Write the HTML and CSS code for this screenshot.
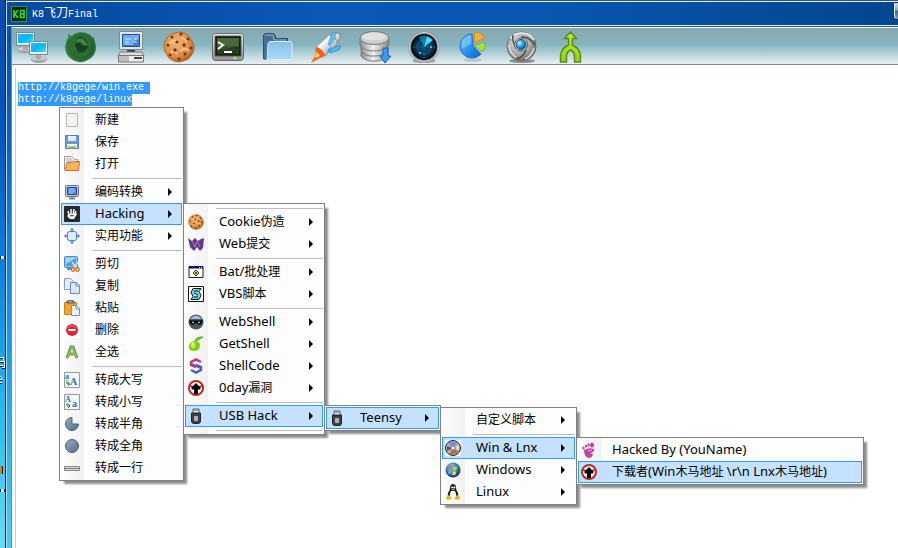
FILE: index.html
```html
<!DOCTYPE html>
<html lang="zh-CN">
<head>
<meta charset="utf-8">
<title>K8飞刀Final</title>
<link rel="stylesheet" href="styles.css">
</head>
<body>
<svg class="defs" aria-hidden="true">
  <defs>
    <linearGradient id="screen" x1="0" y1="0" x2="1" y2="1"><stop offset="0" stop-color="#2fb4f5"/><stop offset=".5" stop-color="#00b8ff"/><stop offset="1" stop-color="#3fe4ff"/></linearGradient>
    <linearGradient id="metal" x1="0" y1="0" x2="0" y2="1"><stop offset="0" stop-color="#f4f4f4"/><stop offset="1" stop-color="#8e8e8e"/></linearGradient>
    <linearGradient id="steel" x1="0" y1="0" x2="1" y2="0"><stop offset="0" stop-color="#8d8d8d"/><stop offset=".45" stop-color="#f2f2f2"/><stop offset="1" stop-color="#858585"/></linearGradient>
    <linearGradient id="hull" x1="0" y1="0" x2="1" y2="1"><stop offset="0" stop-color="#b9b9b9"/><stop offset=".35" stop-color="#fdfdfd"/><stop offset=".7" stop-color="#b4b4b4"/><stop offset="1" stop-color="#777"/></linearGradient>
    <radialGradient id="dough" cx=".4" cy=".35" r=".7"><stop offset="0" stop-color="#f2b878"/><stop offset=".65" stop-color="#dd8c42"/><stop offset="1" stop-color="#a95a1e"/></radialGradient>
    <radialGradient id="fox" cx=".55" cy=".5" r=".6"><stop offset="0" stop-color="#0f3818"/><stop offset=".55" stop-color="#1f5c28"/><stop offset="1" stop-color="#43904c"/></radialGradient>
    <linearGradient id="folder" x1="0" y1="0" x2="0" y2="1"><stop offset="0" stop-color="#88bfe6"/><stop offset="1" stop-color="#a9dbf6"/></linearGradient>
    <linearGradient id="bluepie" x1="0" y1="0" x2="1" y2="1"><stop offset="0" stop-color="#6cc2ff"/><stop offset=".6" stop-color="#2089ee"/><stop offset="1" stop-color="#0d62cc"/></linearGradient>
    <radialGradient id="radar" cx=".5" cy=".5" r=".55"><stop offset="0" stop-color="#0d5686"/><stop offset="1" stop-color="#020d18"/></radialGradient>
    <radialGradient id="ball" cx=".4" cy=".35" r=".7"><stop offset="0" stop-color="#e6e6e6"/><stop offset=".6" stop-color="#a6a6a6"/><stop offset="1" stop-color="#606060"/></radialGradient>
    <radialGradient id="lens" cx=".35" cy=".35" r=".7"><stop offset="0" stop-color="#c8f4ff"/><stop offset=".5" stop-color="#2fa1dd"/><stop offset="1" stop-color="#08548c"/></radialGradient>
    <linearGradient id="lime" x1="0" y1="0" x2="0" y2="1"><stop offset="0" stop-color="#c5e84a"/><stop offset="1" stop-color="#91d010"/></linearGradient>
    <linearGradient id="slate" x1="0" y1="0" x2="1" y2="1"><stop offset="0" stop-color="#9aaec4"/><stop offset="1" stop-color="#526b88"/></linearGradient>
    <radialGradient id="orb" cx=".4" cy=".3" r=".8"><stop offset="0" stop-color="#8fd0f4"/><stop offset=".55" stop-color="#2a6ca8"/><stop offset="1" stop-color="#0c2c58"/></radialGradient>
    <g id="cookie">
      <path d="M16 1q3 0 5 1 3 1 5 3l3 5q2 3 2 7t-3 8q-2 3-5 4t-7 2q-4 0-7-2-4-2-5-5-3-4-3-8 0-5 3-9 2-3 5-4 4-2 7-2z" fill="url(#dough)" stroke="#b5682c"/>
      <path d="M6 13q4-5 9-2M17 20q5-4 9 0M7 22q4-4 7 1M18 7q4 0 6 4" fill="none" stroke="#f7cf9b" stroke-width="1.5"/>
      <g fill="#7b2e18"><circle cx="9" cy="6" r="1.5"/><circle cx="18" cy="3" r="1.5"/><circle cx="25" cy="8" r="1.6"/><circle cx="14" cy="11" r="1.6"/><circle cx="5" cy="14" r="1.5"/><circle cx="21" cy="14" r="1.7"/><circle cx="28" cy="17" r="1.5"/><circle cx="12" cy="19" r="1.7"/><circle cx="22" cy="23" r="1.5"/><circle cx="7" cy="24" r="1.4"/><circle cx="16" cy="28" r="1.5"/></g>
    </g>
    <g id="usb">
      <path d="M5 5V1h6v4" fill="#eee" stroke="#555"/><path d="M6.500 2.500h1M8.500 2.500h1" stroke="#333"/>
      <path d="M3.500 5h9v8q0 2.500-2.500 2.500H6q-2.500 0-2.500-2.500z" fill="#3e4247" stroke="#202327"/><rect x="6" y="8" width="4" height="5" rx="1" fill="#aeb4ba"/>
    </g>
    <g id="zero-day">
      <circle cx="8" cy="8" r="7" fill="#fff" stroke="#c22624" stroke-width="2"/><path d="M2 6l4 1 1 3M14 6l-4 1-1 3" fill="none" stroke="#c22624" stroke-width="1.500"/>
      <path d="M8 3l3 3 2 2-2 2-1-1v5H6V9l-1 1-2-2 2-2z" fill="#080808"/>
    </g>
  </defs>
</svg>

<div class="screen">
  <aside class="desktop" aria-hidden="true">
    <i class="tick tick-a"></i>
    <svg class="fragment" viewBox="0 0 5 30"><path d="M0 2.500h4M3.500 2v4M0 6.500h5M0 10.500h3M4.500 7v5M2 12.500h3" fill="none" stroke="#f4fbff"/><path d="M0 24.500h2M1.500 22v3M0 21.500h1M0 27.500h2" fill="none" stroke="#e4f3fa"/></svg>
    <i class="chip"></i>
    <i class="tick tick-b"></i>
  </aside>
  <main class="window">
    <header class="titlebar">
      <svg class="app-icon" viewBox="0 0 16 16"><path d="M0 0h16v16H0z" fill="#2c9a3c"/><path d="M1 1h14v14H1z" fill="#062708"/><path d="M3 4v8M7 4l-3 4 3 4M9.500 4.500h3.500V8H9.500zM9.500 8h3.500v3.500H9.500z" fill="none" stroke="#28d83c" stroke-width="1.700"/></svg>
      <h1>K8<span class="title-zh">飞刀</span>Final</h1>
      <span class="caption-button"></span>
    </header>
    <section class="client">
      <nav class="toolbar" aria-label="工具栏">
        <button class="tool" aria-label="Network"><svg viewBox="0 0 32 32"><ellipse cx="9" cy="19" rx="8" ry="3" fill="url(#metal)" stroke="#999" stroke-width=".5"/><path d="M7 13h5v6H7z" fill="#aaa"/><path d="M.5 1.500h18v13H.500z" fill="#e2e7e9" stroke="#788"/><path d="M2 3h15v9H2z" fill="url(#screen)"/><ellipse cx="23" cy="28.500" rx="8" ry="3" fill="url(#metal)" stroke="#888" stroke-width=".5"/><path d="M20 22h5v6h-5z" fill="#aaa"/><path d="M13.500 10.500h18v13h-18z" fill="#eaf0f2" stroke="#788"/><path d="M15 12h15v9H15z" fill="url(#screen)"/></svg></button>
        <button class="tool" aria-label="Browser"><svg viewBox="0 0 32 32"><path d="M3 2l3 3q4-3 9-4 9 0 13 6l1-1 1 5q3 10-4 16-6 5-13 4Q1 28 0 17 1 9 3 7z" fill="url(#fox)"/><path d="M3 9l8-2 4 3-5 3 2 3 5 1-6 2q3 4 8 2 5-3 4-9-2-6-8-6 8-3 11 4 3 10-5 15-8 4-15-3Q0 16 3 9z" fill="#2e6c35"/><path d="M12 9q5-3 8 1l3 4-4 1-6-3z" fill="#5aa260" opacity=".65"/><path d="M10 13l5-2 4 4-2 5-5-2z" fill="#12401b"/></svg></button>
        <button class="tool" aria-label="Computer"><svg viewBox="0 0 32 32"><path d="M5.500.500h23v18h-23z" fill="#e1e5e9" stroke="#838990"/><path d="M8.500 3.500h17v12h-17z" fill="#3c83d0" stroke="#174f91"/><path d="M9 4h16v4L9 15z" fill="#6eabea"/><path d="M11 8h6m3 0h3M11 11h4m3 0h5M12 13h7" stroke="#c7eaff"/><path d="M13 19h8v3h-8z" fill="#333b46"/><path d="M6 21h22l2 4H4z" fill="#ddd" stroke="#777"/><path d="M4.500 24.500h25V31h-25z" fill="#eee" stroke="#777"/><path d="M6 25v6m2-6v6m2-6v6m2-6v6m2-6v6" stroke="#8d8d8d"/><path d="M20 27h8" stroke="#444" stroke-width="2"/></svg></button>
        <button class="tool" aria-label="Cookie"><svg viewBox="0 0 32 32"><use href="#cookie"/></svg></button>
        <button class="tool" aria-label="Terminal"><svg viewBox="0 0 32 32"><rect x=".5" y="2.500" width="31" height="27" rx="3" fill="url(#metal)" stroke="#686868"/><path d="M3 5h26v20H3z" fill="#16200f" stroke="#555"/><path d="M5 7h22v8L5 20z" fill="#4b683d"/><path d="M5 15h22v8H5z" fill="#304929" opacity=".7"/><path d="M6 11l5 3-5 4" fill="none" stroke="#e3ffdc" stroke-width="2"/><path d="M12 21h8" stroke="#fff" stroke-width="2"/><circle cx="23" cy="27" r="1.500" fill="#91ff28"/></svg></button>
        <button class="tool" aria-label="Folder"><svg viewBox="0 0 32 32"><path d="M2.500 28V4l2-1.500h8l2 2v3h12V28z" fill="#496f98" stroke="#2d4c70"/><path d="M4 5l1-1h7l1 5h12" fill="none" stroke="#8eafcf"/><path d="M8.500 10.500H30l1 2v16H6l1-16z" fill="url(#folder)" stroke="#d5efff"/></svg></button>
        <button class="tool" aria-label="Rocket"><svg viewBox="0 0 32 32"><path d="M13 10l7-3 5-6 1 7-4 6zM21 18l9-4 1 2-2 3-9 3z" fill="#54b6f4" stroke="#2b7cb6" stroke-width=".7"/><path d="M6 16L19 4q7-3 11-1 1 4-3 10L15 25q-2-6-9-9z" fill="url(#hull)" stroke="#777" stroke-width=".7"/><path d="M20 4q6 2 8 8" fill="none" stroke="#888"/><path d="M22 2l-4 11 2 2 5-8 1-6z" fill="#5fb9f4" stroke="#3d8fd0" stroke-width=".5"/><path d="M18 18l4-3-1 5-4 2z" fill="#2aaee4"/><path d="M6 16q7 2 9 9l-7 3-7 4 4-7z" fill="#f4601b"/><path d="M6 21q3 1 4 4l-4 2-1-1z" fill="#ffd05a"/></svg></button>
        <button class="tool" aria-label="Database"><svg viewBox="0 0 32 32"><g fill="url(#steel)" stroke="#777"><path d="M2 21v4q5 6 14 5 9 0 13-5v-5z"/><path d="M2 15v5q4 6 14 5 10 0 13-5v-6z"/><path d="M1 8v6q4 6 14 6t15-6V8z"/><ellipse cx="15.500" cy="7" rx="14.500" ry="6.500" fill="#ccc"/></g><ellipse cx="15" cy="5.500" rx="12" ry="4" fill="#eee" opacity=".6"/><path d="M24 17h5v8h3l-6 7-5-7h3z" fill="#339bf1" stroke="#1764bd"/></svg></button>
        <button class="tool" aria-label="Radar"><svg viewBox="0 0 32 32"><ellipse cx="16" cy="30" rx="12" ry="2" fill="#667" opacity=".5"/><circle cx="16" cy="16" r="14" fill="url(#radar)" stroke="#8d8d8d" stroke-width="3"/><circle cx="16" cy="16" r="14.500" fill="none" stroke="#d7d7d7"/><circle cx="16" cy="16" r="12" fill="none" stroke="#051019" stroke-width="2"/><path d="M16 4v24M4 16h24" stroke="#155b82"/><circle cx="16" cy="16" r="7" fill="none" stroke="#1d638c"/><path d="M16 16L19 5l6 4z" fill="#35e4ff"/><path d="M16 15L11 6q4-2 8-1z" fill="#2399cc" opacity=".6"/><circle cx="12" cy="22" r="1" fill="#7eeaff"/><circle cx="23" cy="16" r="1" fill="#64caff"/></svg></button>
        <button class="tool" aria-label="Chart"><svg viewBox="0 0 32 32"><ellipse cx="16" cy="29" rx="9" ry="2" fill="#98afb5" opacity=".5"/><path d="M15 3A12 12 0 1 0 24 23L16 15z" fill="url(#bluepie)" stroke="#1976cf"/><path d="M5 10q3-5 9-6v9l-9 5q-1-4 0-8z" fill="#a5dcff" opacity=".45"/><path d="M17.500 12V1q7 0 10.500 6z" fill="#f3b13b" stroke="#c88c28"/><path d="M17.500 15l10-4q2 6-2 10z" fill="#a6e243" stroke="#79ba26"/></svg></button>
        <button class="tool" aria-label="Scanner"><svg viewBox="0 0 32 32"><ellipse cx="16" cy="30" rx="13" ry="2" fill="#555" opacity=".6"/><circle cx="15.500" cy="15.500" r="14.500" fill="url(#ball)" stroke="#686868"/><path d="M4 7q5-5 12-5 8 0 12 7" fill="none" stroke="#f4f4f4" stroke-width="1.500"/><path d="M15 6q8-1 14 8M9 15Q6 9 7 4M20 19q-2 6-9 9" fill="none" stroke="#4c4c4c" stroke-width="1.500"/><path d="M3 14q1 9 7 12M28 17q-2 8-9 11" fill="none" stroke="#dedede" stroke-width="1.500"/><circle cx="15" cy="13.500" r="6.500" fill="#e9e9e9" stroke="#555"/><circle cx="15" cy="13.500" r="5" fill="url(#lens)" stroke="#155178"/></svg></button>
        <button class="tool" aria-label="Merge"><svg viewBox="0 0 32 32"><path d="M15.500 1l6 6.500h-4V14q8 4 8 11v6h-6v-6q0-4-4-6-4 2-4 6v6h-6v-6q0-7 8-11V7.500h-4z" fill="url(#lime)" stroke="#568f0f" stroke-width="1.500"/></svg></button>
      </nav>
      <textarea class="editor" aria-label="文本" spellcheck="false" wrap="off">http://k8gege/win.exe
http://k8gege/linux</textarea>
    </section>
  </main>
</div>

<ul class="menu context-menu">
  <li><button class="item"><svg viewBox="0 0 16 16"><path d="M2.500 1.500h11v13h-11z" fill="#f4f4f0" stroke="#b8b8b0"/></svg><span class="label zh">新建</span></button></li>
  <li><button class="item"><svg viewBox="0 0 16 16"><path d="M1.500 1.500h13v13h-13z" fill="#6c98d8" stroke="#5a80c4"/><path d="M4 2h8v5H4z" fill="#dcecff"/><path d="M4 3h8" stroke="#fff"/><path d="M3 10h10v4H3z" fill="#fff"/><path d="M4 12h8v2H4z" fill="#9bca60"/></svg><span class="label zh">保存</span></button></li>
  <li><button class="item"><svg viewBox="0 0 16 16"><path d="M.5.500h7l3 3h3v10H.500z" fill="#f4f4f4" stroke="#999"/><path d="M2 3h6M2 5h8" stroke="#aaa"/><path d="M3 6.500h6l1-1h5.500l-1 9H1z" fill="#ffb45c" stroke="#cd731f"/></svg><span class="label zh">打开</span></button></li>
  <li class="separator"></li>
  <li><button class="item"><svg viewBox="0 0 16 16"><rect x="1.500" y="1.500" width="13" height="11" rx="1" fill="#ccd0d6" stroke="#686e7d"/><path d="M3.500 3.500h9v7h-9z" fill="#4d91df" stroke="#203f83"/><path d="M5 5h5M5 7h6M5 9h4" stroke="#9ecfff"/><path d="M5 14.500h6M7 13h2" stroke="#888" stroke-width="2"/></svg><span class="label zh">编码转换</span><i class="arrow"></i></button></li>
  <li><button class="item open"><svg viewBox="0 0 16 16"><rect width="16" height="16" rx="1" fill="#292929"/><path d="M4 5l1 4M7 3v6M10 3L9 9M12 5l-2 5" stroke="#fff" stroke-width="1.500"/><path d="M5 8h6l1-1 1 1-3 5H6L3 10l1-1z" fill="#fff"/><path d="M6 10q2-1 4 0" fill="none" stroke="#333"/></svg><span class="label">Hacking</span><i class="arrow"></i></button>
    <ul class="menu submenu menu-hacking">
      <li class="separator"></li>
      <li><button class="item"><svg viewBox="0 0 32 32"><use href="#cookie"/></svg><span class="label">Cookie<span class="zh">伪造</span></span><i class="arrow"></i></button></li>
      <li><button class="item"><svg viewBox="0 0 16 16"><path d="M0 2l4 3 3-3 3 3 3-2 3-1-1 10-3 3-3-4-3 4-4-4z" fill="#633a83"/><path d="M4 5l3 6 2-6M10 6l2 5" fill="none" stroke="#a984c1"/></svg><span class="label">Web<span class="zh">提交</span></span><i class="arrow"></i></button></li>
      <li class="separator"></li>
      <li><button class="item"><svg viewBox="0 0 16 16"><path d="M1 2.500h14v11H1z" fill="#fff" stroke="#222"/><path d="M1 3.500h14" stroke="#000090" stroke-width="2"/><path d="M11 3.500h3" stroke="#fff" stroke-dasharray="1 1"/><path d="M8 6l3 3-3 3-3-3z" fill="#e5e529" stroke="#333"/><circle cx="8" cy="9" r="1" fill="#222"/></svg><span class="label">Bat/<span class="zh">批处理</span></span><i class="arrow"></i></button></li>
      <li><button class="item"><svg viewBox="0 0 16 16"><path d="M.5.500h15v15H.500z" fill="#fff" stroke="#111"/><path d="M5 2.500h8l-2 3 2 4-2 4H3l2-3-2-4z" fill="#68d9dc" stroke="#111"/><path d="M6 5h4M6 7l4 2M6 11h4" stroke="#111"/><path d="M6 9h2" stroke="#fff"/></svg><span class="label">VBS<span class="zh">脚本</span></span><i class="arrow"></i></button></li>
      <li class="separator"></li>
      <li><button class="item"><svg viewBox="0 0 16 16"><circle cx="8" cy="8" r="7.500" fill="#4b5662"/><path d="M2 5q6-7 12 0z" fill="#a6bfd3"/><path d="M1 6q6 1 14 0-1 5-4 5L8 9l-3 2q-3 0-4-5z" fill="#07090e"/><path d="M4 8l2 1M10 9l2-1" stroke="#fff"/></svg><span class="label">WebShell</span><i class="arrow"></i></button></li>
      <li><button class="item"><svg viewBox="0 0 16 16"><path d="M7 5q1-4 8-4-3 4-7 4 4 1 4 4 0 6-6 6-6 0-5-5 1-5 6-5z" fill="#85cf1c"/><path d="M7 5q1-4 8-4" fill="none" stroke="#349127"/><ellipse cx="5" cy="9" rx="2" ry="3" fill="#ccf56e"/></svg><span class="label">GetShell</span><i class="arrow"></i></button></li>
      <li><button class="item"><svg viewBox="0 0 16 16"><path d="M13 4L8 1.500 3 4v3l5 2" fill="none" stroke="#ca3770" stroke-width="2.500"/><path d="M8 7l5 2v3l-5 2.500L3 12" fill="none" stroke="#475fbd" stroke-width="2.500"/><path d="M3 6l10 4" stroke="#7f4a9d" stroke-width="2"/></svg><span class="label">ShellCode</span><i class="arrow"></i></button></li>
      <li><button class="item"><svg viewBox="0 0 16 16"><use href="#zero-day"/></svg><span class="label">0day<span class="zh">漏洞</span></span><i class="arrow"></i></button></li>
      <li class="separator"></li>
      <li><button class="item open"><svg viewBox="0 0 16 16"><use href="#usb"/></svg><span class="label">USB Hack</span><i class="arrow"></i></button>
        <ul class="menu submenu menu-usb">
          <li><button class="item open"><svg viewBox="0 0 16 16"><use href="#usb"/></svg><span class="label">Teensy</span><i class="arrow"></i></button>
            <ul class="menu submenu menu-teensy">
              <li><button class="item"><svg viewBox="0 0 16 16"></svg><span class="label zh">自定义脚本</span><i class="arrow"></i></button></li>
              <li class="separator"></li>
              <li><button class="item open"><svg viewBox="0 0 16 16"><path d="M0 0h16v16H0z" fill="#fff"/><circle cx="8" cy="8" r="7.500" fill="#b8b4c5" stroke="#222"/><path d="M8 8L3 3q5-4 10 0z" fill="#7d91e0"/><path d="M8 8l6 4q-5 4-10 2z" fill="#aa7454"/><path d="M8 8L2 6v5z" fill="#7b4d44"/><path d="M8 8l6-3v5z" fill="#ead4c7"/><circle cx="8" cy="8" r="2" fill="#fff" stroke="#77758a"/></svg><span class="label">Win &amp; Lnx</span><i class="arrow"></i></button>
                <ul class="menu submenu menu-payload">
                  <li><button class="item"><svg viewBox="0 0 16 16"><g fill="#bd43a5"><ellipse cx="11" cy="3" rx="2" ry="2.500"/><ellipse cx="7.500" cy="3" rx="1.200" ry="1.700"/><ellipse cx="5" cy="4" rx="1.200" ry="1.600"/><ellipse cx="2.500" cy="6" rx="1.200" ry="1.500"/><path d="M3 8q5-3 10-1 1 3-4 4l3 1q-1 4-4 4-5-1-5-8z"/></g><path d="M7 9l4-1" stroke="#e6a7da"/></svg><span class="label">Hacked By (YouName)</span></button></li>
                  <li><button class="item open"><svg viewBox="0 0 16 16"><use href="#zero-day"/></svg><span class="label"><span class="zh">下载者</span>(Win<span class="zh">木马地址</span> \r\n Lnx<span class="zh">木马地址</span>)</span></button></li>
                </ul>
              </li>
              <li><button class="item"><svg viewBox="0 0 16 16"><circle cx="8" cy="8" r="7.500" fill="url(#orb)"/><path d="M4 4q2-1 3.500 0L7 7.500q-2-1-3.500 0z" fill="#f36b2e"/><path d="M8.500 4.500q2 1 4 0l-1 3.500q-2 1-3.500 0z" fill="#a3dc3d"/><path d="M3.500 8.500q2-1 3.500 0L6 12q-2-1-3 0z" fill="#57b4f2"/><path d="M8 9q2 1 3.500 0l-1 3.500q-2 1-3.500 0z" fill="#fbd544"/></svg><span class="label">Windows</span><i class="arrow"></i></button></li>
              <li><button class="item"><svg viewBox="0 0 16 16"><path d="M5 4q0-4 3-4t3 4q0 2 2 5 1 3-1 5H4q-2-2-1-5 2-3 2-5z" fill="#1d1d1d"/><path d="M6 7h4q2 3 1 7H5Q4 10 6 7z" fill="#fff"/><circle cx="7" cy="3.500" r="1" fill="#fff"/><circle cx="9.300" cy="3.500" r="1" fill="#fff"/><path d="M6.500 5h3.500L8 6.500zM1 13l3-2 3 4-5 1zM15 13l-3-2-3 4 5 1z" fill="#f1b01d"/></svg><span class="label">Linux</span><i class="arrow"></i></button></li>
            </ul>
          </li>
        </ul>
      </li>
      <li class="separator"></li>
    </ul>
  </li>
  <li><button class="item"><svg viewBox="0 0 16 16"><rect x="3.500" y="3.500" width="9" height="9" rx="2" fill="#deebfb" stroke="#4f77cc"/><path d="M8 0l2 2.500H6zM8 16l2-2.500H6zM0 8l2.500-2v4zM16 8l-2.500-2v4z" fill="#3469d7"/></svg><span class="label zh">实用功能</span><i class="arrow"></i></button></li>
  <li class="separator"></li>
  <li><button class="item"><svg viewBox="0 0 16 16"><rect x=".5" y=".5" width="13" height="11" rx="1" fill="#8cc5f0" stroke="#428ec8"/><path d="M2 2h10v8H2z" fill="#4f9edb"/><path d="M2 2h10L2 8z" fill="#a5d5f6"/><path d="M3 13h5" stroke="#4d93c6" stroke-width="2"/><path d="M8 6l5 7M14 6l-5 7" stroke="#ddd" stroke-width="1.500"/><circle cx="9" cy="13.500" r="1.700" fill="none" stroke="#d87818" stroke-width="1.500"/><circle cx="13.500" cy="13.500" r="1.700" fill="none" stroke="#d87818" stroke-width="1.500"/></svg><span class="label zh">剪切</span></button></li>
  <li><button class="item"><svg viewBox="0 0 16 16"><path d="M.5.500h6l3 3v8h-9z" fill="#e4eefb" stroke="#809dcc"/><path d="M6.500 4.500h6l3 3v8h-9z" fill="#d8e8fb" stroke="#628cc5"/><path d="M12 5v3h3" fill="none" stroke="#628cc5"/></svg><span class="label zh">复制</span></button></li>
  <li><button class="item"><svg viewBox="0 0 16 16"><path d="M.5 2.500h12v12H.500z" fill="#f4a526" stroke="#d47e13"/><path d="M3 3h7V1H8V0H5v1H3z" fill="#a9a9a9" stroke="#555"/><path d="M7.500 5.500h5l3 3v7h-8z" fill="#edf5ff" stroke="#6c91c8"/><path d="M12 6v3h3" fill="none" stroke="#6c91c8"/></svg><span class="label zh">粘贴</span></button></li>
  <li><button class="item"><svg viewBox="0 0 16 16"><path d="M0 0h16v16H0z" fill="#fff"/><circle cx="8" cy="8" r="6" fill="#e22434"/><path d="M4 6q4-5 8 0" stroke="#f36b73" fill="none"/><path d="M4.500 8h7" stroke="#fff" stroke-width="2"/></svg><span class="label zh">删除</span></button></li>
  <li><button class="item"><svg viewBox="0 0 16 16"><path d="M3 14L7 3h2l4 11M5 10h6" fill="none" stroke="#6d9848" stroke-width="3"/><path d="M3.500 13L7.500 3h1l4 10M5.500 10h5" fill="none" stroke="#9fce6c"/></svg><span class="label zh">全选</span></button></li>
  <li class="separator"></li>
  <li><button class="item"><svg viewBox="0 0 16 16"><path d="M.5.500h15v15H.500z" fill="#f5f7fa" stroke="#999"/><text x="1" y="7" class="glyph small-glyph">a</text><text x="6" y="13" class="glyph">A</text><path d="M3 8v4h3M4 10l2 2-2 2" fill="none" stroke="#348522"/></svg><span class="label zh">转成大写</span></button></li>
  <li><button class="item"><svg viewBox="0 0 16 16"><path d="M.5.500h15v15H.500z" fill="#f5f7fa" stroke="#999"/><text x="1" y="8" class="glyph small-glyph">A</text><text x="8" y="13" class="glyph">a</text><path d="M3 9v3h3M4 10l2 2-2 2" fill="none" stroke="#348522"/></svg><span class="label zh">转成小写</span></button></li>
  <li><button class="item"><svg viewBox="0 0 16 16"><path d="M8 1.500A6.500 6.500 0 1 0 14.500 8H8z" fill="url(#slate)" stroke="#4d6077"/></svg><span class="label zh">转成半角</span></button></li>
  <li><button class="item"><svg viewBox="0 0 16 16"><circle cx="8" cy="8" r="6.500" fill="url(#slate)" stroke="#4d6077"/></svg><span class="label zh">转成全角</span></button></li>
  <li><button class="item"><svg viewBox="0 0 16 16"><path d="M.5 6.500h15v4H.500z" fill="#ddd" stroke="#888"/><path d="M1 8.500h14" stroke="#777"/></svg><span class="label zh">转成一行</span></button></li>
</ul>
<script src="app.js"></script>
</body>
</html>
```
FILE: app.js
```js
// Start with the whole URL list selected, as the menu acts on the selection.
const editor = document.querySelector('.editor');
editor.focus();
editor.select();
```
FILE: styles.css
```css
* { box-sizing: border-box; }
body {
  margin: 0;
  background: #fff;
  font-family: "Noto Sans", "Noto Sans CJK SC", sans-serif;
  font-size: 13px;
  color: #000;
}
button { font: inherit; color: inherit; border: 0; background: none; padding: 0; }
svg { display: block; flex: none; }
.defs { position: absolute; width: 0; height: 0; }

.screen {
  display: flex;
  height: 100vh;
  overflow: hidden;
}
.desktop {
  position: relative;
  flex: none;
  width: 6px;
  overflow: hidden;
  border-right: 1px solid #062238;
  background: linear-gradient(#0a4ba8, #0556bd 25%, #0d84dc 50%, #20b6ee 72%, #62dcf2);
}
.fragment { position: absolute; left: 0; top: 355px; width: 5px; height: 30px; filter: drop-shadow(0 1px 0 #123); }
.tick { position: absolute; left: 0; width: 5px; height: 3px; background: #cfe6ee; border-left: 1px solid #234; border-right: 1px solid #234; }
.tick-a { top: 256px; }
.tick-b { top: 489px; }
.chip { position: absolute; left: 0; top: 466px; width: 3px; height: 8px; background: #d88216; border-right: 1px solid #124; }

.window {
  display: flex;
  flex-direction: column;
  flex: 1;
  min-width: 0;
  padding-left: 4px;
  border-left: 1px solid #b8dcec;
  border-top: 1px solid #24587c;
  background: linear-gradient(#0a4ea8, #0762c6 25%, #1389dd 50%, #22a8ea 72%, #48cdf0);
}
.titlebar {
  display: flex;
  align-items: center;
  gap: 5px;
  height: 25px;
  flex: none;
  margin-left: -4px;
  padding-left: 4px;
  border-top: 1px solid #e4eef6;
  border-bottom: 1px solid #e4f0f8;
  background: linear-gradient(90deg, #0549a0, #0b58b6 35%, #0957b0 60%, #02468e);
}
.app-icon { width: 16px; height: 16px; }
h1 {
  flex: 1;
  margin: 0;
  padding-top: 2px;
  color: #fff;
  font: 10px/14px "Liberation Mono", "Noto Sans CJK SC", monospace;
}
.title-zh { font-size: 12px; }
.caption-button {
  align-self: flex-start;
  width: 5px;
  height: 18px;
  border: 1px solid #1a2c48;
  border-right: 0;
  border-radius: 0 0 0 3px;
  background: linear-gradient(#c8d4e0, #8da7c0 45%, #3d6590 50%, #7d9fbe);
  box-shadow: inset 1px 0 #e8eef4;
}
.client {
  display: flex;
  flex-direction: column;
  flex: 1;
  min-height: 0;
  border-left: 1px solid #7c8894;
  border-top: 1px solid #1c5878;
  background: #fff;
}
.toolbar {
  display: flex;
  gap: 17px;
  height: 38px;
  flex: none;
  padding: 3px 4px 0;
  border-top: 1px solid #fff;
  border-bottom: 1px solid #858b98;
  background: linear-gradient(#89a8b0, #86b4c0 45%, #e3edf0 97%);
}
.tool, .tool svg { width: 32px; height: 32px; }
.tool { flex: none; }
.editor {
  flex: 1;
  width: auto;
  margin: 3px 0 0 3px;
  padding: 14px 0 0 2px;
  border: 0;
  border-left: 1px solid #b6cfe8;
  outline: 0;
  resize: none;
  overflow: hidden;
  background: #fff;
  color: #000;
  font: 10px/12px "Liberation Mono", monospace;
}
.editor::selection { background: #3399ff; color: #fff; }

.menu {
  position: absolute;
  margin: 0;
  padding: 1px;
  list-style: none;
  border: 1px solid #808080;
  background: linear-gradient(90deg, #fdfdfd, #f1f1f1 24px, #fdfdfd 24px);
  box-shadow: 4px 4px 2px -1px rgba(0, 0, 0, .45);
}
.menu li { position: relative; }
.context-menu { left: 59px; top: 107px; width: 125px; }
.submenu { left: calc(100% + 1px); top: 0; }
.menu-hacking { width: 142px; }
.menu-usb { width: 117px; }
.menu-teensy { width: 137px; }
.menu-payload { width: 288px; }
.item {
  display: flex;
  align-items: center;
  width: 100%;
  height: 22px;
  padding: 0 10px 0 3px;
  text-align: left;
  white-space: nowrap;
}
.item svg { width: 16px; height: 16px; }
.item.open { background: #c4e1ff; box-shadow: inset 0 0 0 1px #3399ff; }
.label { flex: 1; margin-left: 15px; padding-bottom: 2px; line-height: 20px; }
.label.zh { padding-bottom: 0; }
.zh { font-size: 12px; }
.arrow {
  border-left: 4px solid #000;
  border-top: 4px solid transparent;
  border-bottom: 4px solid transparent;
}
.separator { height: 6px; padding: 3px 0 0 31px; }
.separator::before { content: ""; display: block; height: 1px; background: #bdbdbd; }
.glyph { font: bold 10px "Liberation Serif", serif; fill: #2474ba; }
.small-glyph { font-size: 8px; }
```
